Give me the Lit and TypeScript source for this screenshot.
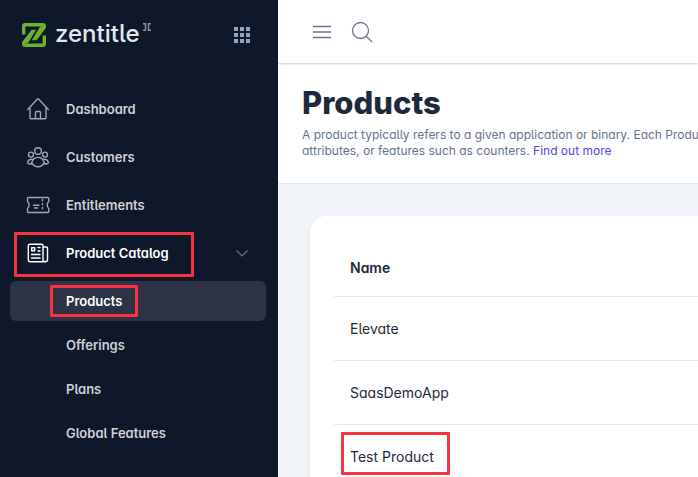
import { LitElement, html, svg, css, nothing } from "lit";
import { customElement, property } from "lit/decorators.js";
import { classMap } from "lit/directives/class-map.js";

const icons: Record<string, unknown> = {
  home: svg`<path d="M1.700 12.500 11.500 2q.5-.5 1 0L22.300 12.500M4 10.500V21q0 .7.7.7h14.600q.7 0 .7-.7V10.500M9.500 21.500V15.500q0-1 1-1h3q1 0 1 1v6"/>`,
  people: svg`<circle cx="12" cy="6" r="3.300"/><circle cx="5" cy="9.600" r="2.500"/><circle cx="19" cy="9.600" r="2.500"/><path d="M12 12.400c3.500 0 5.200 2 6.300 5-1.300 2.900-3.500 4.300-6.300 4.300s-5-1.400-6.300-4.300c1.100-3 2.800-5 6.300-5ZM7 14.400c-2.700-.7-4.700.4-5.600 3.400 1.300 1.300 3 1.500 4.700.7M17 14.400c2.700-.7 4.700.4 5.600 3.400-1.300 1.300-3 1.500-4.700.7"/>`,
  ticket: svg`<path d="M2.500 4.500h19.300q1 0 1 1v3.200q-1.600 1-1.600 3.300t1.600 3.500v3q0 1-1 1H2.500q-1 0-1-1v-3q1.600-1.200 1.600-3.500T1.500 8.700V5.500q0-1 1-1Z"/><path d="M16.500 6.500v11.500" stroke-dasharray="1.300 2.700"/><path d="M7.500 12.300h5.500M8.500 15h3"/>`,
  news: svg`<path d="M17 6h3.300q1.200 0 1.200 1.200v11.600q0 2-2.200 2H4.500q-2.200 0-2.200-2V5q0-1.700 1.700-1.700h11.500Q17 3.300 17 5v13.800q0 2 2.300 2"/><path d="M5.700 6.700h3v3h-3zM12 6.500h2M12 10h2M5.500 13.500h8.500M5.500 17h8.500"/>`,
};

interface NavEntry {
  label: string;
  icon: string;
  children?: string[];
}

const nav: NavEntry[] = [
  { label: "Dashboard", icon: "home" },
  { label: "Customers", icon: "people" },
  { label: "Entitlements", icon: "ticket" },
  {
    label: "Product Catalog",
    icon: "news",
    children: ["Products", "Offerings", "Plans", "Global Features"],
  },
];

@customElement("side-nav")
class SideNav extends LitElement {
  @property() current = "Products";

  static styles = css`
    :host {
      display: block;
      flex: 0 0 278px;
      box-sizing: border-box;
      padding: 0 12px 0 10px;
      background: #0f172a;
      color: #cfd1d4;
      font-size: 13px;
      font-weight: 600;
      line-height: 20px;
    }
    .brand {
      display: flex;
      align-items: center;
      justify-content: space-between;
      height: 69px;
      padding: 0 16px 0 12px;
      margin-bottom: 16px;
    }
    .logo {
      display: flex;
      align-items: center;
      gap: 9px;
      color: #e2e8f0;
      font-size: 24px;
      font-weight: 500;
      line-height: 28px;
      text-decoration: none;
    }
    .word {
      display: flex;
      align-items: flex-start;
      gap: 3px;
      padding-bottom: 2px;
    }
    .mark {
      margin-top: 3px;
    }
    button {
      font: inherit;
      color: inherit;
      background: none;
      border: 0;
      padding: 0;
      cursor: pointer;
    }
    .apps,
    .logo svg {
      display: flex;
    }
    ul {
      list-style: none;
      margin: 0;
      padding: 0;
    }
    .item {
      display: flex;
      align-items: center;
      box-sizing: border-box;
      width: 100%;
      height: 48px;
      padding: 0 16px;
      gap: 16px;
      color: inherit;
      text-decoration: none;
      text-align: left;
    }
    .icon {
      width: 24px;
      height: 24px;
      fill: none;
      stroke: #a0a5ae;
      stroke-width: 1.4;
      stroke-linecap: round;
      stroke-linejoin: round;
    }
    .open {
      color: #fff;
    }
    .open .icon {
      stroke: #fff;
    }
    .chevron {
      margin-left: auto;
    }
    .sub {
      display: flex;
      flex-direction: column;
      gap: 4px;
      padding-top: 4px;
    }
    .leaf {
      display: flex;
      align-items: center;
      height: 40px;
      padding-left: 56px;
      border-radius: 6px;
      color: inherit;
      text-decoration: none;
    }
    .leaf.active {
      background: #2d3344;
      color: #fff;
    }
    .framed {
      position: relative;
    }
    .framed::before {
      content: "";
      position: absolute;
      border: 3px solid #fa323f;
      border-radius: 1px;
      pointer-events: none;
    }
    .item.framed::before {
      inset: 3px 72px 0 4px;
    }
    .label.framed::before {
      inset: -6px -16px;
    }
  `;

  private chevron() {
    return html`<svg class="chevron" width="16" height="16" viewBox="0 0 16 16" aria-hidden="true">
      <path d="m2.500 5.500 5.500 5.500 5.500-5.500" fill="none" stroke="#64748b" stroke-width="1.200" />
    </svg>`;
  }

  private entry(e: NavEntry) {
    const icon = html`<svg class="icon" viewBox="0 0 24 24" aria-hidden="true">${icons[e.icon]}</svg>`;
    if (!e.children) {
      return html`<li><a class="item" href="#">${icon}<span>${e.label}</span></a></li>`;
    }
    return html`<li>
      <button class="item open framed" type="button" aria-expanded="true">
        ${icon}<span>${e.label}</span>${this.chevron()}
      </button>
      <ul class="sub">
        ${e.children.map((c) => {
          const active = c === this.current;
          return html`<li>
            <a class=${classMap({ leaf: true, active })} href="#" aria-current=${active ? "page" : nothing}>
              <span class=${classMap({ label: true, framed: active })}>${c}</span>
            </a>
          </li>`;
        })}
      </ul>
    </li>`;
  }

  render() {
    return html`
      <div class="brand">
        <a class="logo" href="#">
          <svg width="24" height="24" viewBox="0 0 24 24" aria-hidden="true">
            <path fill="none" stroke="#6fb02c" stroke-width="3.400" stroke-linejoin="round" d="M1.700 11.500V3.200q0-1.500 1.500-1.500h17.600q1.500 0 1.500 1.500v1M22.300 12.500v8.300q0 1.500-1.500 1.500H3.200q-1.500 0-1.500-1.500v-1" />
            <path fill="#6fb02c" d="M18.200 3.400H24v1.300L14.600 17.200H9.800ZM9.600 6.800h4.600L5.800 20.600H0v-1.300Z" />
          </svg>
          <span class="word">
            <span>zentitle</span>
            <svg class="mark" width="8" height="8" viewBox="0 0 8 8" fill="none" stroke="#8b8f98" stroke-width="1.500" aria-hidden="true">
              <path d="M0 .8h2.500v6.400H0M8 .8H5.500v6.400H8" />
            </svg>
          </span>
        </a>
        <button class="apps" type="button" aria-label="Applications">
          <svg width="16" height="16" viewBox="0 0 16 16" fill="#94a3b8">
            ${[0, 6, 12].map((y) => [0, 6, 12].map((x) => svg`<rect x=${x} y=${y} width="4" height="4" />`))}
          </svg>
        </button>
      </div>
      <nav>
        <ul>
          ${nav.map((e) => this.entry(e))}
        </ul>
      </nav>
    `;
  }
}

@customElement("app-root")
class AppRoot extends LitElement {
  static styles = css`
    :host {
      display: flex;
      height: 100vh;
      overflow: hidden;
      font-family: Inter, "Liberation Sans", sans-serif;
      font-feature-settings: "cv05", "cv11";
      color: #1e293b;
      background: #f1f5f9;
    }
    main {
      flex: 1;
      min-width: 0;
      overflow: hidden;
    }
    .bar {
      position: relative;
      display: flex;
      align-items: center;
      gap: 16px;
      height: 63px;
      padding-left: 32px;
      background: #fff;
      box-shadow: 0 1px 2px rgba(0, 0, 0, 0.2);
    }
    .bar button {
      display: flex;
      border: 0;
      padding: 0;
      background: none;
      cursor: pointer;
    }
    .bar svg {
      fill: none;
      stroke: #64748b;
      stroke-width: 1.3;
    }
    .intro {
      padding: 20px 0 24px 24px;
      background: #fff;
      border-bottom: 1px solid #e2e8f0;
    }
    h1 {
      margin: 0;
      font-size: 31px;
      font-weight: 800;
      line-height: 40px;
    }
    p {
      margin: 4px 0 0;
      font-size: 12px;
      line-height: 16px;
      color: #64748b;
      white-space: nowrap;
    }
    p a {
      color: #4f46e5;
      text-decoration: none;
    }
    .card {
      margin: 32px 0 0 32px;
      padding: 24px 0 24px 24px;
      background: #fff;
      border-radius: 16px 0 0 0;
      box-shadow: 0 1px 3px rgba(15, 23, 42, 0.12);
    }
    table {
      width: 100%;
      border-spacing: 0;
      font-size: 14px;
      line-height: 20px;
      text-align: left;
    }
    th,
    td {
      height: 63px;
      padding: 0 16px;
      border-bottom: 1px solid #e2e8f0;
      font-weight: 400;
    }
    th {
      height: 56px;
      font-weight: 600;
    }
    .framed {
      position: relative;
    }
    .framed::before {
      content: "";
      position: absolute;
      inset: -16px -16px -10px -9px;
      border: 3px solid #fa323f;
      border-radius: 1px;
    }
  `;

  render() {
    const products = ["Elevate", "SaasDemoApp", "Test Product"];
    return html`
      <side-nav></side-nav>
      <main>
        <div class="bar">
          <button type="button" aria-label="Menu">
            <svg width="24" height="24" viewBox="0 0 24 24"><path d="M3 6.500h18M3 12h18M3 17.500h18" /></svg>
          </button>
          <button type="button" aria-label="Search">
            <svg width="24" height="24" viewBox="0 0 24 24"><circle cx="10.500" cy="10.500" r="8" /><path d="m16 16 6 6" /></svg>
          </button>
        </div>
        <header class="intro">
          <h1>Products</h1>
          <p>
            A product typically refers to a given application or binary. Each Product can have<br />
            attributes, or features such as counters. <a href="#">Find out more</a>
          </p>
        </header>
        <section class="card">
          <table>
            <thead>
              <tr><th scope="col">Name</th></tr>
            </thead>
            <tbody>
              ${products.map(
                (p) => html`<tr><td><span class=${classMap({ framed: p === "Test Product" })}>${p}</span></td></tr>`
              )}
            </tbody>
          </table>
        </section>
      </main>
    `;
  }
}
